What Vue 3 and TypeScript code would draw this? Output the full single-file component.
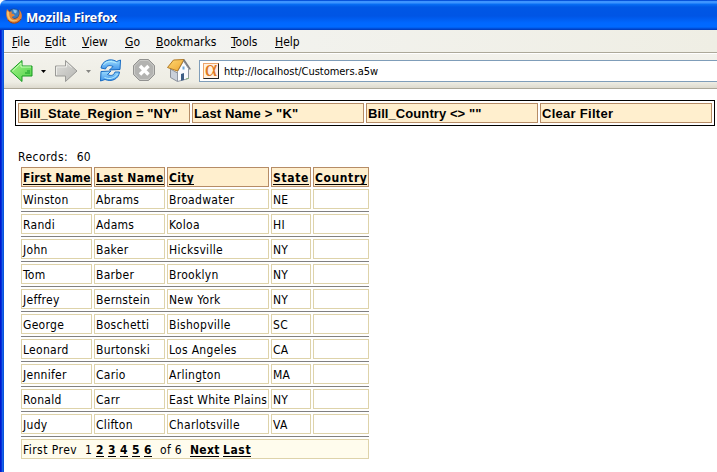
<script setup lang="ts">
interface MenuItem { key: string; rest: string; width: number }
interface Customer { first: string; last: string; city: string; state: string }
interface Label { text: string; spacing: number }

const menu: MenuItem[] = [
  { key: 'F', rest: 'ile', width: 33 },
  { key: 'E', rest: 'dit', width: 37 },
  { key: 'V', rest: 'iew', width: 43 },
  { key: 'G', rest: 'o', width: 31 },
  { key: 'B', rest: 'ookmarks', width: 75 },
  { key: 'T', rest: 'ools', width: 44 },
  { key: 'H', rest: 'elp', width: 40 },
]
const filters: Label[] = [
  { text: 'Bill_State_Region = "NY"', spacing: 0.1 },
  { text: 'Last Name > "K"', spacing: 0.13 },
  { text: 'Bill_Country <> ""', spacing: 0.08 },
  { text: 'Clear Filter', spacing: 0.28 },
]
const headers: Label[] = [
  { text: 'First Name', spacing: 0.1 },
  { text: 'Last Name', spacing: 0.35 },
  { text: 'City', spacing: 0.3 },
  { text: 'State', spacing: 0.65 },
  { text: 'Country', spacing: 0.6 },
]
const customers: Customer[] = [
  { first: 'Winston', last: 'Abrams', city: 'Broadwater', state: 'NE' },
  { first: 'Randi', last: 'Adams', city: 'Koloa', state: 'HI' },
  { first: 'John', last: 'Baker', city: 'Hicksville', state: 'NY' },
  { first: 'Tom', last: 'Barber', city: 'Brooklyn', state: 'NY' },
  { first: 'Jeffrey', last: 'Bernstein', city: 'New York', state: 'NY' },
  { first: 'George', last: 'Boschetti', city: 'Bishopville', state: 'SC' },
  { first: 'Leonard', last: 'Burtonski', city: 'Los Angeles', state: 'CA' },
  { first: 'Jennifer', last: 'Cario', city: 'Arlington', state: 'MA' },
  { first: 'Ronald', last: 'Carr', city: 'East White Plains', state: 'NY' },
  { first: 'Judy', last: 'Clifton', city: 'Charlotsville', state: 'VA' },
]
const pages: number[] = [2, 3, 4, 5, 6]
</script>

<template>
  <div class="window">
    <header class="title-bar">
      <svg class="fox" width="16" height="16" viewBox="0 0 16 16">
        <circle cx="8" cy="7.500" r="7" fill="#1d4585" />
        <circle cx="8.500" cy="5.500" r="4.500" fill="#3b7dc0" />
        <path d="M7 1.500l4 1-1 3-2-1z" fill="#8fc6ea" />
        <path d="M1 1C-.5 6 0 11 4 14c4 3 10 1 11.500-4C16.400 7 15.500 4 13 1.500c.5 2 .8 4.500-.2 6.600-1 2-3 3-5 2.400-1.300-.4-1.800-1.100-1.800-1.800L9 7.500 7.500 6 5.500 5.500 6 3.500 3.500 3.800z" fill="#e48335" />
        <path d="M1 3C.5 7 1.600 11 4.500 12.800c3 1.500 6.500.6 8.500-1.700-3 1.600-7 1.500-8.800-1.200C3 8 3.200 6 3 4z" fill="#f6c06a" />
        <path d="M2 12c3 4.500 10 4.200 13-1" fill="none" stroke="#8a3a1a" />
      </svg>
      <span class="title">Mozilla Firefox</span>
    </header>
    <div class="body">
      <nav class="menu">
        <span v-for="m in menu" :key="m.key" class="menu-item" :style="{ width: m.width + 'px' }"><u>{{ m.key }}</u>{{ m.rest }}</span>
      </nav>
      <div class="toolbar">
        <svg class="icons" width="190" height="34" viewBox="4 54 190 34">
          <defs>
            <linearGradient id="green" x1="0" y1="0" x2="1" y2="1"><stop offset="0" stop-color="#a5f589" /><stop offset="1" stop-color="#4fcf48" /></linearGradient>
            <linearGradient id="gray" x1="0" y1="0" x2="1" y2="1"><stop offset="0" stop-color="#e0e0dc" /><stop offset="1" stop-color="#b5b5b2" /></linearGradient>
            <linearGradient id="blue" x1="0" y1="0" x2="0" y2="1"><stop offset="0" stop-color="#9bdcff" /><stop offset="1" stop-color="#4295e9" /></linearGradient>
            <linearGradient id="roof" x1="0" y1="0" x2="1" y2="1"><stop offset="0" stop-color="#ffd873" /><stop offset="1" stop-color="#eda530" /></linearGradient>
          </defs>
          <path d="M10.500 71L22 60.500V66h10v10H22v5.500z" fill="url(#green)" stroke="#169a20" stroke-linejoin="round" />
          <path d="M12.500 71L21 63v4h10" fill="none" stroke="#c9ffb9" />
          <path d="M25 72h2v-2h3v4h-5z" fill="#159b28" opacity=".5" />
          <path d="M41 70h5l-2.500 3z" fill="#000" />
          <path d="M77 71L65.500 60.500V66h-10v10h10v5.500z" fill="url(#gray)" stroke="#9a9a97" stroke-linejoin="round" />
          <path d="M56.500 75V67h10v-4l5 4.500" fill="none" stroke="#eeeeea" />
          <path d="M86 70h5l-2.500 3z" fill="#858582" />
          <path d="M101 68c1-7 9-10.500 15.500-6.500l4-1.500-.5 9.500-10.500.5 3.500-3.500c-4-2-6.500-.5-7.500 2.500z" fill="url(#blue)" stroke="#176bc3" stroke-linejoin="round" />
          <path d="M119.500 72c-1 7.500-8 10-14.500 7.500l-4.500 1.500.5-9.500 10-.5-3.500 3.500c4 2 6.500.5 7.500-2.500z" fill="url(#blue)" stroke="#176bc3" stroke-linejoin="round" />
          <path d="M103.500 65c3-4.500 8-4 13-2M104.500 77.500c5 2 10 1 13-3.500" fill="none" stroke="#baf0ff" />
          <path d="M139.500 59.500h9l6 6v9l-6 6h-9l-6-6v-9z" fill="#b3b3b1" stroke="#929290" />
          <path d="M140 60.500h8l5.500 5.500v8l-5.500 5.500h-8l-5.500-5.500v-8z" fill="none" stroke="#cacac7" />
          <path d="M140 66l8.500 8.500M148.500 66L140 74.500" stroke="#fff" stroke-width="3.400" />
          <path d="M170.500 69l7 4v8.500l-7-4z" fill="#c9d0da" stroke="#8b919b" stroke-linejoin="round" />
          <path d="M177.500 71.500l6-10.500 5 7.500v10l-11 3z" fill="#fafbfd" stroke="#9299a4" stroke-linejoin="round" />
          <path d="M181 74l3-1v7l-3 .8z" fill="#3e5f86" />
          <path d="M182.500 66.500h2v3h-2z" fill="#6aa5d8" />
          <path d="M167.500 67.500l6-7.500 10.500-.5-6.500 11.500z" fill="url(#roof)" stroke="#b27a26" stroke-linejoin="round" />
          <path d="M184 60l6 9" fill="none" stroke="#777980" stroke-width="1.400" stroke-linecap="round" />
          <path d="M186 79l3-1" stroke="#8cb67e" />
        </svg>
        <div class="address">
          <span class="site-icon">α</span>
          <span class="url">http://localhost/Customers.a5w</span>
        </div>
      </div>
      <main class="page">
        <div class="filters">
          <div v-for="f in filters" :key="f.text" class="filter" :style="{ letterSpacing: f.spacing + 'px' }">{{ f.text }}</div>
        </div>
        <div class="records">Records:&nbsp; <span class="count">60</span></div>
        <div class="table">
          <div class="row">
            <div v-for="h in headers" :key="h.text" class="cell head" :style="{ letterSpacing: h.spacing + 'px' }"><span class="link">{{ h.text }}</span></div>
          </div>
          <template v-for="c in customers" :key="c.last">
            <div class="row">
              <div class="cell">{{ c.first }}</div>
              <div class="cell">{{ c.last }}</div>
              <div class="cell">{{ c.city }}</div>
              <div class="cell">{{ c.state }}</div>
              <div class="cell"></div>
            </div>
            <div class="rule"></div>
          </template>
          <div class="cell pager">
            <span class="prev">First Prev</span>
            <span class="current">1</span>
            <span v-for="p in pages" :key="p" class="num"><span class="link">{{ p }}</span></span>
            <span class="total">of 6</span>
            <span class="link next">Next</span>
            <span class="link last">Last</span>
          </div>
        </div>
      </main>
    </div>
  </div>
</template>

<style>
body { margin: 0; overflow: hidden; background: #fff; }
</style>

<style scoped>
* { box-sizing: border-box; }
.window {
  width: 717px; height: 472px; overflow: hidden; background: #fff;
  font: 12px/14px "DejaVu Sans Condensed", "DejaVu Sans", sans-serif; font-stretch: condensed; color: #000;
}
.title-bar {
  height: 30px; display: flex; align-items: flex-start; padding: 8px 0 0 6px; border-top-left-radius: 6px;
  background: linear-gradient(#0753db 0 1px, #3e94ff 1px 3px, #0870f5 4px, #0057e5 7px, #0055e5 16px, #0068ff 23px, #006aff 27px, #0047ce 29px, #0038b5 30px);
}
.title { margin: 2px 0 0 4px; color: #fff; font: bold 13px/15px "Noto Sans", sans-serif; letter-spacing: -.22px; text-shadow: 1px 1px #0a2f8c; }
.body { height: 442px; padding-left: 4px; background: linear-gradient(90deg, #0019cf 0 1px, #0831d9 1px 2px, #1660e8 2px 3px, #0855dd 3px 4px, #fff 4px); }
.menu { height: 24px; display: flex; padding: 5px 0 0 8px; border-bottom: 1px solid #fff; box-shadow: inset 0 -1px #aca899; background: linear-gradient(100deg, #f4f5f4, #efeee4); }
.menu-item { white-space: nowrap; }
u { text-underline-offset: 1px; text-decoration-thickness: 1px; text-decoration-skip-ink: none; }
.toolbar { height: 35px; display: flex; border-bottom: 1px solid #aca899; background: linear-gradient(#f3f2ec, #eeede4 28px, #dddace); }
.icons { flex: none; }
.address { flex: 1; height: 22px; margin: 6px 0 0 5px; display: flex; border: 1px solid #7f9db9; border-right: 0; background: #fff; }
.site-icon { width: 16px; height: 16px; margin: 2px 0 0 3px; border: 1px solid #eda66c; border-right-color: #222; border-bottom-color: #222; background: #fff1e4; color: #df7a22; font: 24px/9px "Liberation Serif", serif; text-align: center; }
.url { margin: 4px 0 0 5px; font-size: 11px; letter-spacing: -.03px; }
.page { padding: 11px 2px 0 11px; }
.filters { width: 700px; height: 26px; display: grid; grid-template-columns: repeat(4, 172px); gap: 2px; padding: 2px; border: 1px solid #000; }
.filter { height: 20px; padding: 2px 0 0 1px; border: 1px solid #b68c66; background: #ffefce; font: bold 13px/15px "Liberation Sans", sans-serif; white-space: pre; }
.records { margin: 24px 0 0 3px; height: 17px; letter-spacing: .45px; }
.count { margin-left: 1px; letter-spacing: 0; }
.table { width: 348px; margin-left: 6px; display: flex; flex-direction: column; gap: 2px; }
.row { display: grid; grid-template-columns: 71px 71px 102px 40px 56px; gap: 2px; }
.cell { height: 20px; padding: 3px 0 0 1px; border: 1px solid #ded3aa; white-space: nowrap; letter-spacing: .3px; }
.head { border-color: #b68c66; background: #ffefce; }
.rule { height: 1px; background: #808080; }
.pager { display: flex; background: #fffced; }
.prev { width: 62px; letter-spacing: .45px; }
.current { width: 11px; }
.link { height: 14px; display: inline-block; line-height: 14px; font-weight: bold; border-bottom: 1px solid #000; }
.num { width: 12px; }
.total { width: 34px; padding-left: 4px; }
.next { width: 29px; margin-right: 4px; }
.last { width: 28px; letter-spacing: .6px; }
</style>
